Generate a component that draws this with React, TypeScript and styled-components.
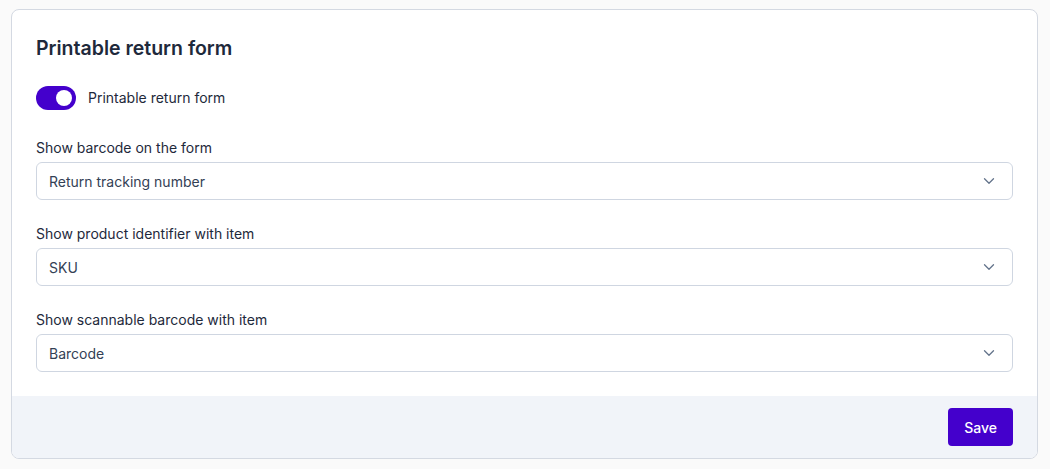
import { useState } from "react";
import styled, { createGlobalStyle } from "styled-components";
import { ChevronDown } from "lucide-react";

const GlobalStyle = createGlobalStyle`
  * { box-sizing: border-box; }
  body {
    margin: 0;
    background: #fafafa;
    font-family: Inter, "Noto Sans", sans-serif;
    color: #1e293b;
  }
`;

const Page = styled.div`
  padding: 9px 12px 10px 11px;
`;

const Card = styled.section`
  background: #ffffff;
  border: 1px solid #d4d9e2;
  border-radius: 8px;
  overflow: hidden;
`;

const Body = styled.div`
  padding: 24px;
  display: flex;
  flex-direction: column;
`;

const Title = styled.h2`
  margin: 0;
  font-size: 19.5px;
  line-height: 28px;
  font-weight: 600;
  color: #1e293b;
`;

const ToggleRow = styled.label`
  margin-top: 24px;
  display: flex;
  align-items: center;
  gap: 12px;
  font-size: 14px;
  line-height: 24px;
  color: #1e293b;
  cursor: pointer;
`;

const Track = styled.span<{ $on: boolean }>`
  position: relative;
  width: 40px;
  height: 24px;
  border-radius: 12px;
  background: ${(p) => (p.$on ? "#4400cc" : "#cbd5e1")};
  flex-shrink: 0;
`;

const Knob = styled.span<{ $on: boolean }>`
  position: absolute;
  top: 4px;
  left: ${(p) => (p.$on ? "20px" : "4px")};
  width: 16px;
  height: 16px;
  border-radius: 50%;
  background: #ffffff;
`;

const Field = styled.div<{ $first?: boolean }>`
  margin-top: ${(p) => (p.$first ? "28px" : "24px")};
  display: flex;
  flex-direction: column;
  gap: 4px;
`;

const Label = styled.span`
  font-size: 14px;
  line-height: 20px;
  color: #1e293b;
`;

const SelectBox = styled.div`
  height: 38px;
  border: 1px solid #cfd6e1;
  border-radius: 6px;
  padding: 0 14px 0 12px;
  display: flex;
  align-items: center;
  justify-content: space-between;
  font-size: 14px;
  color: #334155;
  background: #ffffff;
  svg { color: #64748b; }
`;

const Footer = styled.div`
  background: #f1f4f9;
  padding: 12px 24px;
  display: flex;
  justify-content: flex-end;
`;

const SaveButton = styled.button`
  height: 38px;
  padding: 0 16px;
  border: none;
  border-radius: 4px;
  background: #4400cc;
  color: #ffffff;
  font-family: inherit;
  font-size: 14px;
  font-weight: 500;
  cursor: pointer;
`;

const fields = [
  { label: "Show barcode on the form", value: "Return tracking number" },
  { label: "Show product identifier with item", value: "SKU" },
  { label: "Show scannable barcode with item", value: "Barcode" },
];

export default function App() {
  const [on, setOn] = useState(true);
  return (
    <>
      <GlobalStyle />
      <Page>
        <Card>
          <Body>
            <Title>Printable return form</Title>
            <ToggleRow onClick={() => setOn(!on)}>
              <Track $on={on}>
                <Knob $on={on} />
              </Track>
              Printable return form
            </ToggleRow>
            {fields.map((f, i) => (
              <Field key={f.label} $first={i === 0}>
                <Label>{f.label}</Label>
                <SelectBox>
                  {f.value}
                  <ChevronDown size={18} strokeWidth={1.75} />
                </SelectBox>
              </Field>
            ))}
          </Body>
          <Footer>
            <SaveButton>Save</SaveButton>
          </Footer>
        </Card>
      </Page>
    </>
  );
}
